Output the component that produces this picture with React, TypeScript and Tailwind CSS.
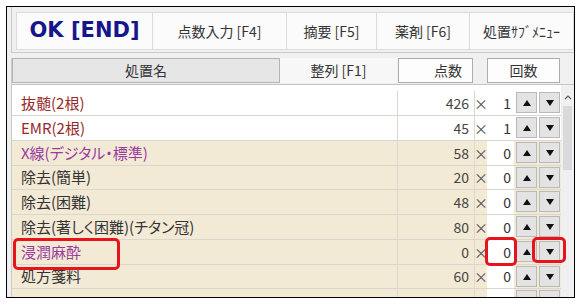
import { FC } from "react";

type Row = {
  name: string;
  color: string;
  points: string;
  count: string;
  white: boolean;
  h: string;
};

const rows: Row[] = [
  { name: "抜髄(2根)", color: "text-[#962a2a]", points: "426", count: "1", white: true, h: "h-[25px]" },
  { name: "EMR(2根)", color: "text-[#962a2a]", points: "45", count: "1", white: true, h: "h-[25px]" },
  { name: "X線(デジタル・標準)", color: "text-[#9a3a9e]", points: "58", count: "0", white: false, h: "h-[25px]" },
  { name: "除去(簡単)", color: "text-[#333333]", points: "20", count: "0", white: false, h: "h-[24px]" },
  { name: "除去(困難)", color: "text-[#333333]", points: "48", count: "0", white: false, h: "h-[25px]" },
  { name: "除去(著しく困難)(チタン冠)", color: "text-[#333333]", points: "80", count: "0", white: false, h: "h-[25px]" },
  { name: "浸潤麻酔", color: "text-[#9a3a9e]", points: "0", count: "0", white: false, h: "h-[25px]" },
  { name: "処方箋料", color: "text-[#333333]", points: "60", count: "0", white: false, h: "h-[24px]" },
  // partly hidden row at the bottom edge
  { name: "", color: "text-[#333333]", points: "", count: "", white: false, h: "h-[25px]" },
];

const Arrow: FC<{ up?: boolean }> = ({ up }) => (
  <svg width="8" height="6" viewBox="0 0 8 6">
    {up ? <polygon points="4,0 8,6 0,6" fill="#111" /> : <polygon points="0,0 8,0 4,6" fill="#111" />}
  </svg>
);

const ToolButton: FC<{ w: string; first?: boolean; children: React.ReactNode }> = ({ w, first, children }) => (
  <div
    className={`${w} h-[38px] shrink-0 flex items-center justify-center bg-[#fbfbfb] border-y border-r border-[#dcdcdc] ${first ? "border-l" : ""}`}
  >
    {children}
  </div>
);

const DataRow: FC<{ row: Row }> = ({ row }) => {
  const bg = row.white ? "bg-white" : "bg-[#f3ead6]";
  return (
    <div className={`flex ${row.h} ${bg} border-b border-[#d9d6cf] text-[15px] [font-feature-settings:'palt']`}>
      <div className={`w-[386px] shrink-0 flex items-center pl-[9px] border-r border-[#dcd8d0] ${row.color}`}>
        {row.name}
      </div>
      <div className="w-[77px] shrink-0 flex items-center justify-end pr-[5px] border-r border-[#dcd8d0] text-[#444] text-[14px]">
        {row.points}
      </div>
      <div className="w-[12px] shrink-0 flex items-center justify-center text-[#555] text-[14px]">
        {row.points ? "×" : ""}
      </div>
      <div className="w-[27px] shrink-0 bg-white flex items-center justify-end pr-[3px] text-[#333] text-[14px]">
        {row.count}
      </div>
      <div className="w-[2px] shrink-0" />
      <div className="w-[21px] h-[21px] mt-[1px] shrink-0 flex items-center justify-center bg-[#e3e3e3] border border-[#b9b9b9]">
        <Arrow up />
      </div>
      <div className="w-[2px] shrink-0" />
      <div className="w-[21px] h-[21px] mt-[1px] shrink-0 flex items-center justify-center bg-[#e3e3e3] border border-[#b9b9b9]">
        <Arrow />
      </div>
    </div>
  );
};

const App: FC = () => {
  return (
    <div className="relative w-[579px] h-[304px] bg-white pt-[6px] pl-[6px] font-['Noto_Sans_CJK_JP',sans-serif] text-[#333]">
      <div className="w-[569px] h-[292px] border border-black bg-[#f0f0f0] overflow-hidden flex flex-col">
        {/* toolbar */}
        <div className="ml-[4px] h-[46px] shrink-0 border-l border-b border-[#c9c9c9] pt-[5px] pl-[4px] flex text-[14px]">
          <ToolButton w="w-[137px]" first>
            <span className="font-['DejaVu_Sans',sans-serif] font-bold text-[21px] text-[#16168a]">OK [END]</span>
          </ToolButton>
          <ToolButton w="w-[134px]">点数入力 [F4]</ToolButton>
          <ToolButton w="w-[90px]">摘要 [F5]</ToolButton>
          <ToolButton w="w-[93px]">薬剤 [F6]</ToolButton>
          <ToolButton w="w-[104px]">処置ｻﾌﾞﾒﾆｭｰ</ToolButton>
        </div>

        {/* list */}
        <div className="ml-[4px] mt-[5px] flex-1 flex flex-col border-l border-[#c9c9c9]">
          <div className="h-[25px] shrink-0 flex text-[14px]">
            <div className="w-[268px] shrink-0 flex items-center justify-center bg-[#e6e6e6] border border-[#b4b4b4]">
              処置名
            </div>
            <div className="w-[117px] shrink-0 flex items-center justify-center bg-[#f7f7f7]">整列 [F1]</div>
            <div className="w-[1px] shrink-0" />
            <div className="w-[75px] shrink-0 flex items-center justify-end pr-[10px] bg-[#fdfdfd] border border-[#adadad]">
              点数
            </div>
            <div className="w-[14px] shrink-0" />
            <div className="w-[73px] shrink-0 flex items-center justify-center bg-[#fdfdfd] border border-[#adadad]">
              回数
            </div>
          </div>

          <div className="mt-[1px] flex-1 flex border-t border-[#c4c4c4]">
            <div className="w-[549px] shrink-0 bg-white pt-[6px]">
              {rows.map((r, i) => (
                <DataRow key={i} row={r} />
              ))}
            </div>
            <div className="flex-1 bg-[#f0f0f0] flex flex-col items-center">
              <svg width="8" height="5" viewBox="0 0 8 5" className="mt-[10px]">
                <polyline points="1,4 4,1 7,4" fill="none" stroke="#606060" strokeWidth="1.2" />
              </svg>
              <div className="mt-[6px] w-[9px] h-[64px] bg-[#dadada]" />
            </div>
          </div>
        </div>
      </div>

      {/* annotations */}
      <div className="absolute left-[13px] top-[238px] w-[107px] h-[32px] border-[3px] border-[#e8141b] rounded-[5px]" />
      <div className="absolute left-[485px] top-[237px] w-[32px] h-[29px] border-[3px] border-[#e8141b] rounded-[5px]" />
      <div className="absolute left-[532px] top-[237px] w-[34px] h-[26px] border-[3px] border-[#e8141b] rounded-[5px]" />
    </div>
  );
};

export default App;
